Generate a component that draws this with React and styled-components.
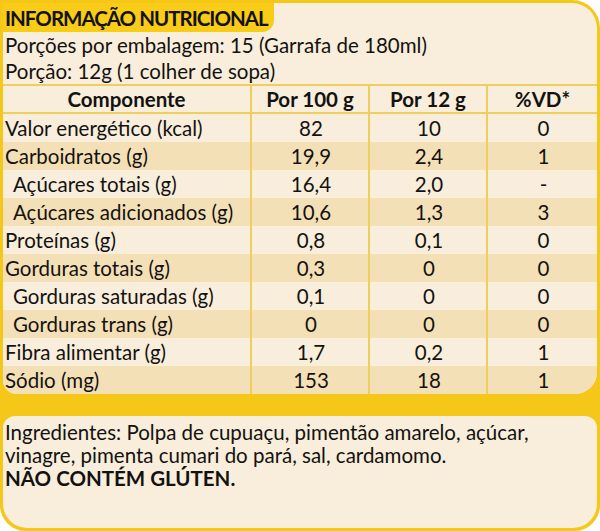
import React from "react";
import styled, { createGlobalStyle } from "styled-components";

const yellow = "#f5c718";
const cream = "#f8eedb";
const creamDark = "#f4e0b6";
const line = "#eecf5e";

const GlobalStyle = createGlobalStyle`
  html, body {
    margin: 0;
    padding: 0;
    background: #ffffff;
  }
  body {
    font-family: Lato, "Open Sans", sans-serif;
    color: #141210;
  }
`;

const Card = styled.div`
  width: 600px;
  height: 531px;
  box-sizing: border-box;
  border: 3px solid ${yellow};
  border-radius: 0 28px 26px 26px;
  background: ${yellow};
  overflow: hidden;
  display: flex;
  flex-direction: column;
  gap: 22px;
`;

const Upper = styled.div`
  background: ${cream};
  border-radius: 0 0 22px 14px;
  display: flex;
  flex-direction: column;
  overflow: hidden;
`;

const Title = styled.div`
  align-self: flex-start;
  height: 29px;
  line-height: 30px;
  padding: 0 6px 0 2px;
  background: #f8cc17;
  border-bottom-right-radius: 12px;
  font-size: 20.5px;
  font-weight: 700;
  letter-spacing: -1px;
`;

const Info = styled.div`
  padding-left: 2px;
  font-size: 20.5px;
  line-height: 26px;
`;

const Table = styled.table`
  width: 100%;
  border-collapse: collapse;
  table-layout: fixed;
  font-size: 20.5px;
`;

const Head = styled.th`
  height: 26px;
  padding: 0;
  font-weight: 700;
  text-align: center;
  border-top: 2px solid ${line};
  border-bottom: 2px solid ${line};
  border-left: ${(p) => (p.$first ? "none" : `2px solid ${line}`)};
  width: ${(p) => p.$w || "auto"};
`;

const Row = styled.tr`
  height: 28px;
  background: ${(p) => (p.$dark ? creamDark : cream)};
`;

const Cell = styled.td`
  padding: 0 0 0 ${(p) => (p.$indent ? "10px" : "2px")};
  line-height: 28px;
  text-align: ${(p) => (p.$left ? "left" : "center")};
  border-left: ${(p) => (p.$left ? "none" : `2px solid ${line}`)};
  white-space: nowrap;
`;

const Lower = styled.div`
  flex: 1;
  background: ${cream};
  border-radius: 12px 12px 24px 24px;
  padding: 5px 0 0 2px;
  font-size: 20.5px;
  line-height: 23px;
`;

const Strong = styled.div`
  font-weight: 700;
`;

const rows = [
  ["Valor energético (kcal)", "82", "10", "0"],
  ["Carboidratos (g)", "19,9", "2,4", "1"],
  ["Açúcares totais (g)", "16,4", "2,0", "-", true],
  ["Açúcares adicionados (g)", "10,6", "1,3", "3", true],
  ["Proteínas (g)", "0,8", "0,1", "0"],
  ["Gorduras totais (g)", "0,3", "0", "0"],
  ["Gorduras saturadas (g)", "0,1", "0", "0", true],
  ["Gorduras trans (g)", "0", "0", "0", true],
  ["Fibra alimentar (g)", "1,7", "0,2", "1"],
  ["Sódio (mg)", "153", "18", "1"],
];

export default function App() {
  return (
    <>
      <GlobalStyle />
      <Card>
        <Upper>
          <Title>INFORMAÇÃO NUTRICIONAL</Title>
          <Info>Porções por embalagem: 15 (Garrafa de 180ml)</Info>
          <Info>Porção: 12g (1 colher de sopa)</Info>
          <Table>
            <thead>
              <tr>
                <Head $first $w="247px">Componente</Head>
                <Head $w="116px">Por 100 g</Head>
                <Head $w="116px">Por 12 g</Head>
                <Head>%VD*</Head>
              </tr>
            </thead>
            <tbody>
              {rows.map(([name, a, b, c, sub], idx) => (
                <Row key={name} $dark={idx % 2 === 1}>
                  <Cell $left $indent={sub}>
                    {name}
                  </Cell>
                  <Cell>{a}</Cell>
                  <Cell>{b}</Cell>
                  <Cell>{c}</Cell>
                </Row>
              ))}
            </tbody>
          </Table>
        </Upper>
        <Lower>
          <div>Ingredientes: Polpa de cupuaçu, pimentão amarelo, açúcar,</div>
          <div>vinagre, pimenta cumari do pará, sal, cardamomo.</div>
          <Strong>NÃO CONTÉM GLÚTEN.</Strong>
        </Lower>
      </Card>
    </>
  );
}
